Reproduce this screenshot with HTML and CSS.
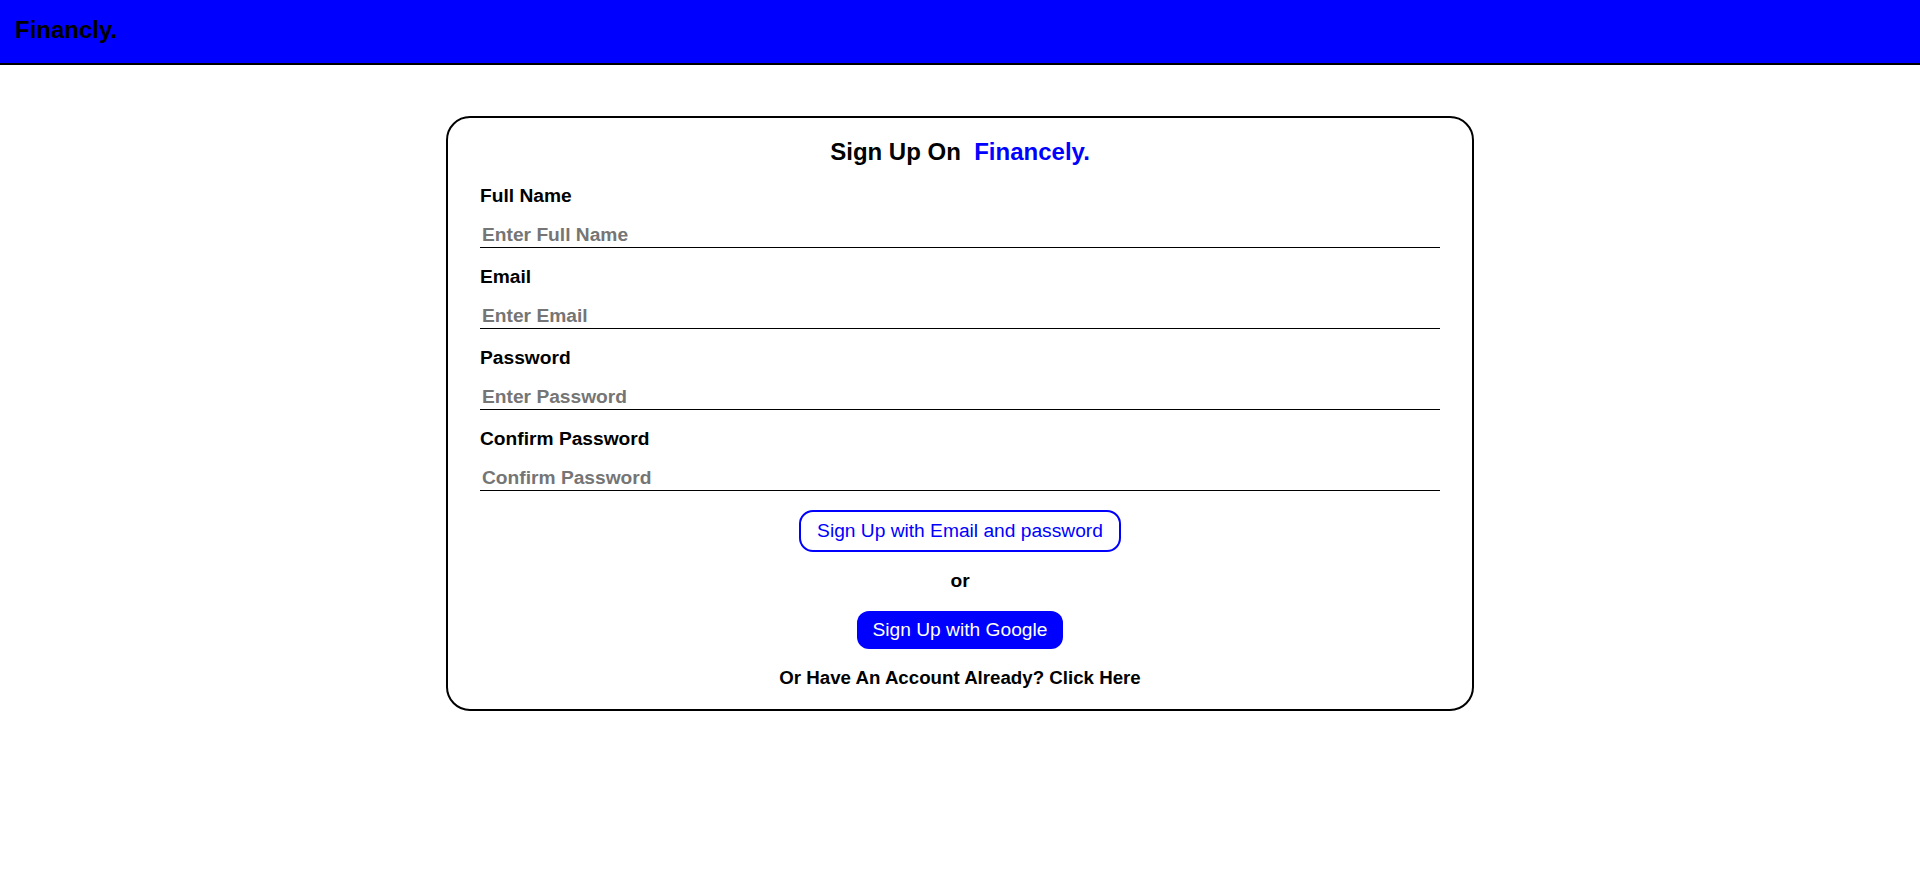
FILE: index.html
```html
<!DOCTYPE html>
<html lang="en">
<head>
<meta charset="utf-8">
<title>Financly. - Sign Up</title>
<link rel="stylesheet" href="styles.css">
</head>
<body>
<header class="topbar">
  <span class="brand">Financly.</span>
</header>
<main class="page">
  <section class="card">
    <h2 class="card-title">Sign Up On&nbsp; <span class="accent">Financely.</span></h2>
    <div class="field">
      <label class="field-label">Full Name</label>
      <input class="field-input" type="text" placeholder="Enter Full Name">
    </div>
    <div class="field">
      <label class="field-label">Email</label>
      <input class="field-input" type="email" placeholder="Enter Email">
    </div>
    <div class="field">
      <label class="field-label">Password</label>
      <input class="field-input" type="password" placeholder="Enter Password">
    </div>
    <div class="field">
      <label class="field-label">Confirm Password</label>
      <input class="field-input" type="password" placeholder="Confirm Password">
    </div>
    <div class="actions">
      <button class="btn btn-outline">Sign Up with Email and password</button>
      <p class="or">or</p>
      <button class="btn btn-solid">Sign Up with Google</button>
      <p class="switch">Or Have An Account Already? Click Here</p>
    </div>
  </section>
</main>
</body>
</html>
```
FILE: styles.css
```css
* {
  box-sizing: border-box;
}

html, body {
  margin: 0;
  padding: 0;
  background: #ffffff;
  font-family: "Liberation Sans", Arial, sans-serif;
  color: #000000;
}

.topbar {
  height: 65px;
  background: #0000ff;
  border-bottom: 2px solid #000000;
  padding: 16px 15px 0;
}

.brand {
  display: block;
  font-size: 24px;
  line-height: 28px;
  font-weight: 700;
  color: #000000;
}

.page {
  padding-top: 51px;
}

.card {
  width: 1028px;
  margin: 0 auto;
  border: 2px solid #000000;
  border-radius: 24px;
  padding: 20px 32px 20px;
  display: flex;
  flex-direction: column;
}

.card-title {
  margin: 0;
  font-size: 24px;
  line-height: 28px;
  font-weight: 700;
  text-align: center;
}

.accent {
  color: #0000ff;
}

.field {
  display: flex;
  flex-direction: column;
  margin-top: 19px;
}

.field + .field {
  margin-top: 18px;
}

.field-label {
  font-size: 19.2px;
  line-height: 22px;
  font-weight: 700;
}

.field-input {
  margin-top: 16px;
  width: 100%;
  font-family: "Liberation Sans", Arial, sans-serif;
  font-size: 19.2px;
  line-height: 22px;
  font-weight: 700;
  color: #000000;
  padding: 1px 2px;
  border: none;
  border-bottom: 1px solid #000000;
  outline: none;
  background: transparent;
}

.field-input::placeholder {
  color: #757575;
  opacity: 1;
}

.actions {
  display: flex;
  flex-direction: column;
  align-items: center;
  margin-top: 19px;
}

.btn {
  font-family: "Liberation Sans", Arial, sans-serif;
  font-size: 19.2px;
  line-height: 22px;
  font-weight: 400;
  cursor: pointer;
  padding: 8px 16px;
}

.btn-outline {
  background: #ffffff;
  color: #0000ff;
  border: 2px solid #0000ff;
  border-radius: 14px;
}

.btn-solid {
  background: #0000ff;
  color: #ffffff;
  border: none;
  border-radius: 12px;
}

.or {
  margin: 18px 0 19px;
  font-size: 19.2px;
  line-height: 22px;
  font-weight: 700;
}

.switch {
  margin: 18px 0 0;
  font-size: 18.7px;
  line-height: 22px;
  font-weight: 700;
}
```
